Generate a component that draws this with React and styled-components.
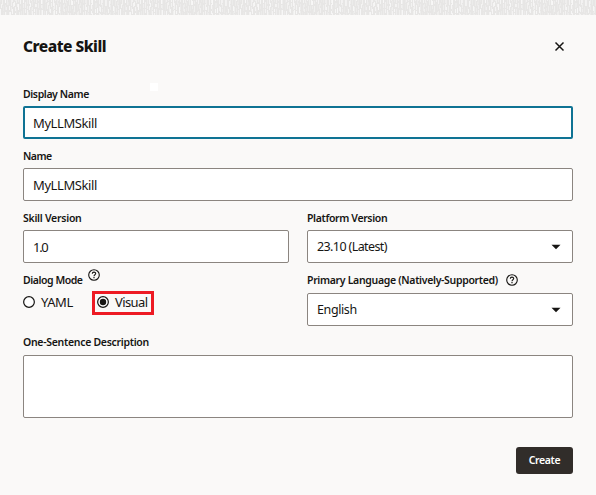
import React from "react";
import styled, { createGlobalStyle } from "styled-components";

const GlobalStyle = createGlobalStyle`
  *, *::before, *::after { box-sizing: border-box; }
  html, body { margin: 0; background: #faf9f8; }
  body { overflow: hidden; }
  button, input, textarea { font: inherit; color: inherit; }
`;

const Dialog = styled.main`
  display: flex;
  flex-direction: column;
  width: 596px;
  height: 495px;
  background: #faf9f8;
  color: #161513;
  font-family: "Noto Sans", "Open Sans", sans-serif;
`;

const Strip = styled.svg`
  display: block;
  flex: none;
  width: 100%;
  height: 15px;
  background: #e7e6e5;
`;

const Header = styled.header`
  display: flex;
  align-items: center;
  justify-content: space-between;
  height: 62px;
  padding: 0 31px 0 23px;
`;

const Title = styled.h1`
  margin: 0;
  font-size: 15.5px;
  font-weight: 800;
  line-height: 20px;
  letter-spacing: -0.5px;
`;

const CloseButton = styled.button`
  display: flex;
  padding: 0;
  border: 0;
  background: none;
`;

const Form = styled.form`
  position: relative;
  display: flex;
  flex-direction: column;
  padding: 0 23px;
`;

const Patch = styled.span`
  position: absolute;
  left: 150px;
  top: 6px;
  width: 8px;
  height: 8px;
  background: #fff;
`;

const Columns = styled.div`
  display: grid;
  grid-template-columns: 266px 266px;
  gap: 18px;
`;

const Field = styled.div`
  display: flex;
  flex-direction: column;
`;

const LabelRow = styled.div`
  display: flex;
  align-items: center;
  height: ${(p) => (p.$tall ? 30 : 29)}px;
  padding: ${(p) => (p.$raised ? "7px 0 4px" : p.$tall ? "8px 0 4px" : "8px 0 3px")};
  gap: ${(p) => p.$gap || 0}px;
`;

const Label = styled.label`
  font-size: 10.5px;
  font-weight: 600;
  line-height: 18px;
  white-space: nowrap;
  letter-spacing: ${(p) => p.$track || 0}px;
`;

const Help = styled.span`
  display: flex;
  margin-top: ${(p) => p.$shift || 0}px;
`;

const control = `
  width: 100%;
  height: 33px;
  border: 1px solid #8b8580;
  border-radius: 2px;
  background: #fff;
  font-size: 13px;
`;

const TextInput = styled.input`
  ${control}
  padding: ${(p) => (p.$active ? "0 8px" : "0 9px")};
  outline: none;
  letter-spacing: ${(p) => p.$track || 0}px;
  ${(p) => p.$active && "border: 2px solid #0f7394;"}
`;

const Select = styled.div`
  ${control}
  display: flex;
  align-items: center;
  justify-content: space-between;
  padding: 0 11px 0 9px;
`;

const Value = styled.span`
  font-size: ${(p) => p.$size || 13}px;
  line-height: 20px;
  white-space: nowrap;
  letter-spacing: ${(p) => p.$track || 0}px;
`;

const TextArea = styled.textarea`
  ${control}
  display: block;
  height: 63px;
  resize: none;
  outline: none;
`;

const Radios = styled.div`
  display: flex;
  align-items: center;
  margin-top: -2px;
  height: 24px;
`;

const Radio = styled.div`
  display: flex;
  align-items: center;
  gap: 6px;
  height: 24px;
  padding-bottom: 2px;
  ${(p) =>
    p.$marked
      ? "width: 62px; margin-left: auto; margin-right: 135px; padding-left: 2px; border: 3px solid #ed1b24;"
      : ""}
`;

const Footer = styled.footer`
  display: flex;
  justify-content: flex-end;
  padding: 29px 23px 0;
`;

const CreateButton = styled.button`
  width: 57px;
  height: 27px;
  padding: 0 0 1px;
  border: 0;
  border-radius: 3px;
  background: #312d2a;
  color: #fff;
  font-size: 10.5px;
  font-weight: 600;
  line-height: 26px;
  letter-spacing: -0.35px;
`;

function buildStrands() {
  let seed = 17;
  const next = () => {
    seed = (seed * 1103515245 + 12345) % 2147483648;
    return seed / 2147483648;
  };
  const strands = [];
  for (let x = 0; x < 120; x += 2) {
    let y = -Math.floor(next() * 5);
    while (y < 15) {
      const h = 3 + Math.floor(next() * 4);
      strands.push({ x: x + Math.floor(next() * 2), y, h, o: 0.1 + next() * 0.6 });
      y += h + 1 + Math.floor(next() * 2);
    }
  }
  return strands;
}

const strands = buildStrands();

const Texture = () => (
  <Strip aria-hidden="true">
    <defs>
      <pattern id="weave" width="120" height="15" patternUnits="userSpaceOnUse">
        {strands.map((s, i) => (
          <rect key={i} x={s.x} y={s.y} width="1" height={s.h} fill="#fff" opacity={s.o} />
        ))}
      </pattern>
    </defs>
    <rect width="100%" height="15" fill="url(#weave)" />
  </Strip>
);

const HelpIcon = () => (
  <svg width="12" height="12" viewBox="0 0 12 12" fill="none" stroke="#161513">
    <circle cx="6" cy="6" r="5.3" strokeWidth="1.1" />
    <path d="M4.3 4.8C4.3 2.6 7.7 2.6 7.7 4.6C7.7 5.8 6 5.7 6 7.2" strokeWidth="1.1" />
    <path d="M6 8.1V9.3" strokeWidth="1.2" />
  </svg>
);

const RadioMark = ({ checked }) => (
  <svg width="12" height="12" viewBox="0 0 12 12">
    <circle cx="6" cy="6" r="5.35" fill="#fff" stroke="#161513" strokeWidth="1.2" />
    {checked && <circle cx="6" cy="6" r="3.2" fill="#161513" />}
  </svg>
);

const Caret = () => (
  <svg width="10" height="6" viewBox="0 0 10 6">
    <path d="M0.5 0.8H9.5L5 5.3Z" fill="#161513" />
  </svg>
);

export default function App() {
  return (
    <Dialog>
      <GlobalStyle />
      <Texture />
      <Header>
        <Title>Create Skill</Title>
        <CloseButton type="button" aria-label="Close">
          <svg width="11" height="11" viewBox="0 0 11 11">
            <path d="M1.5 1.5L9.5 9.5M9.5 1.5L1.5 9.5" stroke="#161513" strokeWidth="1.5" />
          </svg>
        </CloseButton>
      </Header>
      <Form>
        <Patch />
        <Field>
          <LabelRow><Label $track={-0.4}>Display Name</Label></LabelRow>
          <TextInput $active $track={-0.4} defaultValue="MyLLMSkill" />
        </Field>
        <Field>
          <LabelRow><Label $track={-0.5}>Name</Label></LabelRow>
          <TextInput $track={-0.4} defaultValue="MyLLMSkill" />
        </Field>
        <Columns>
          <Field>
            <LabelRow><Label $track={-0.27}>Skill Version</Label></LabelRow>
            <TextInput $track={-1.3} defaultValue="1.0" />
          </Field>
          <Field>
            <LabelRow><Label $track={-0.36}>Platform Version</Label></LabelRow>
            <Select><Value $size={12.5} $track={-0.6}>23.10 (Latest)</Value><Caret /></Select>
          </Field>
        </Columns>
        <Columns>
          <Field>
            <LabelRow $tall $gap={5}>
              <Label $track={-0.45}>Dialog Mode</Label>
              <Help $shift={-10}><HelpIcon /></Help>
            </LabelRow>
            <Radios>
              <Radio><RadioMark /><Value $track={-0.4}>YAML</Value></Radio>
              <Radio $marked><RadioMark checked /><Value $track={-0.6}>Visual</Value></Radio>
            </Radios>
          </Field>
          <Field>
            <LabelRow $tall $gap={8}>
              <Label $track={-0.32}>Primary Language (Natively-Supported)</Label>
              <Help $shift={-1}><HelpIcon /></Help>
            </LabelRow>
            <Select><Value $size={12.5} $track={-0.4}>English</Value><Caret /></Select>
          </Field>
        </Columns>
        <Field>
          <LabelRow $raised><Label $track={-0.3}>One-Sentence Description</Label></LabelRow>
          <TextArea />
        </Field>
      </Form>
      <Footer>
        <CreateButton type="button">Create</CreateButton>
      </Footer>
    </Dialog>
  );
}
